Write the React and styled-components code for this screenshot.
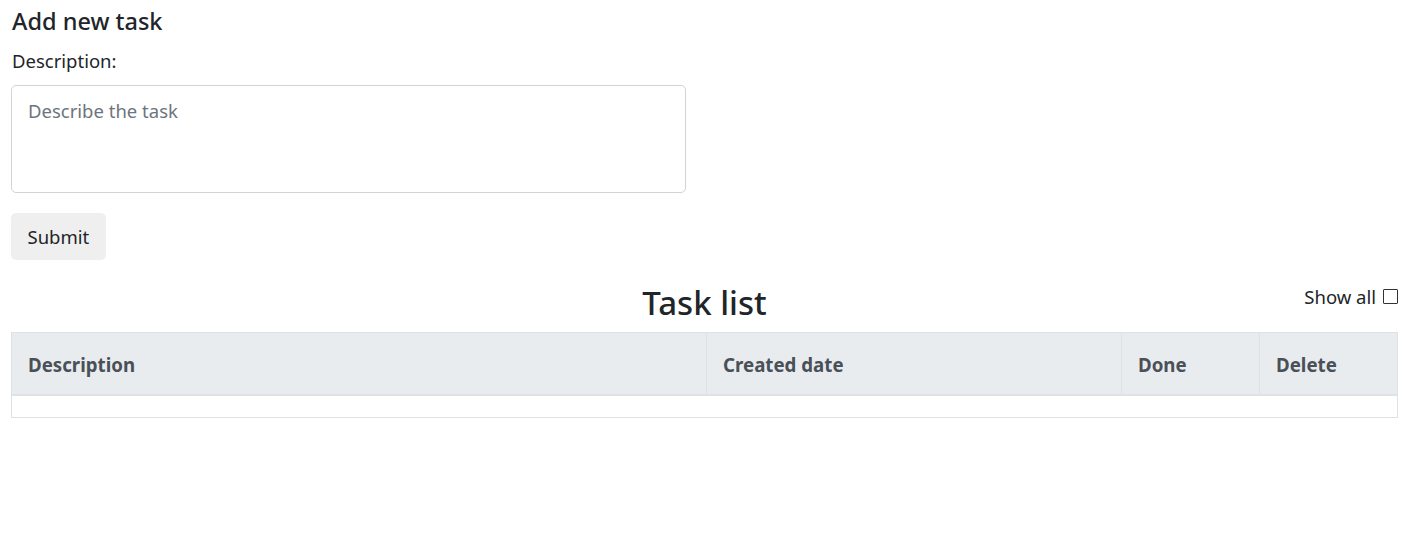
import React, { useState } from "react";
import styled, { createGlobalStyle } from "styled-components";

const GlobalStyle = createGlobalStyle`
  body {
    margin: 0;
    font-family: "Noto Sans", "Open Sans", Arial, sans-serif;
    font-size: 18.5px;
    color: #212529;
    background: #fff;
  }
`;

const Page = styled.div`
  padding: 0 15px 0 11px;
`;

const FormSection = styled.form`
  display: flex;
  flex-direction: column;
  align-items: flex-start;
`;

const Heading = styled.h5`
  font-size: 23.5px;
  font-weight: 500;
  line-height: 1.2;
  margin: 7px 0 12px 1px;
`;

const Label = styled.label`
  font-size: 18.5px;
  line-height: 1.5;
  margin: 0 0 10px 1px;
`;

const TextArea = styled.textarea`
  box-sizing: border-box;
  width: 675px;
  height: 108px;
  padding: 12px 16px;
  font-family: inherit;
  font-size: 18.5px;
  color: #212529;
  border: 1px solid #ced4da;
  border-radius: 5px;
  resize: none;

  &::placeholder {
    color: #6c757d;
  }
`;

const SubmitButton = styled.button`
  margin-top: 20px;
  height: 47px;
  padding: 0 16.5px;
  font-family: inherit;
  font-size: 18.5px;
  color: #212529;
  background: #efefef;
  border: none;
  border-radius: 5px;
`;

const ListHeader = styled.div`
  position: relative;
  display: flex;
  justify-content: center;
  align-items: center;
  box-sizing: border-box;
  margin-top: 10px;
  height: 62px;
  padding-top: 4px;
`;

const ListTitle = styled.h2`
  margin: 0;
  font-size: 33px;
  font-weight: 500;
  line-height: 1.2;
`;

const ShowAll = styled.label`
  position: absolute;
  right: 0;
  top: 14px;
  display: flex;
  align-items: center;
  gap: 7px;
  font-size: 18.5px;
`;

const CheckBox = styled.input`
  appearance: none;
  width: 15px;
  height: 15px;
  margin: 0;
  border: 1.5px solid #333;
  border-radius: 1px;
  background: #fff;
`;

const Table = styled.table`
  width: 100%;
  table-layout: fixed;
  border-collapse: collapse;
  border: 1px solid #dee2e6;
`;

const HeadCell = styled.th`
  text-align: left;
  height: 59px;
  padding: 2px 16px 0;
  font-size: 18.7px;
  font-weight: 700;
  color: #495057;
  background: #e9ecef;
  border: 1px solid #dee2e6;
  border-bottom: 2px solid #dee2e6;
`;

const EmptyRow = styled.tr`
  height: 23px;
`;

export default function App() {
  const [showAll, setShowAll] = useState(false);
  return (
    <Page>
      <GlobalStyle />
      <FormSection onSubmit={(e) => e.preventDefault()}>
        <Heading>Add new task</Heading>
        <Label htmlFor="desc">Description:</Label>
        <TextArea id="desc" placeholder="Describe the task" />
        <SubmitButton type="submit">Submit</SubmitButton>
      </FormSection>
      <ListHeader>
        <ListTitle>Task list</ListTitle>
        <ShowAll>
          Show all
          <CheckBox
            type="checkbox"
            checked={showAll}
            onChange={(e) => setShowAll(e.target.checked)}
          />
        </ShowAll>
      </ListHeader>
      <Table>
        <colgroup>
          <col style={{ width: "695px" }} />
          <col style={{ width: "415px" }} />
          <col style={{ width: "138px" }} />
          <col />
        </colgroup>
        <thead>
          <tr>
            <HeadCell>Description</HeadCell>
            <HeadCell>Created date</HeadCell>
            <HeadCell>Done</HeadCell>
            <HeadCell>Delete</HeadCell>
          </tr>
        </thead>
        <tbody>
          <EmptyRow />
        </tbody>
      </Table>
    </Page>
  );
}
